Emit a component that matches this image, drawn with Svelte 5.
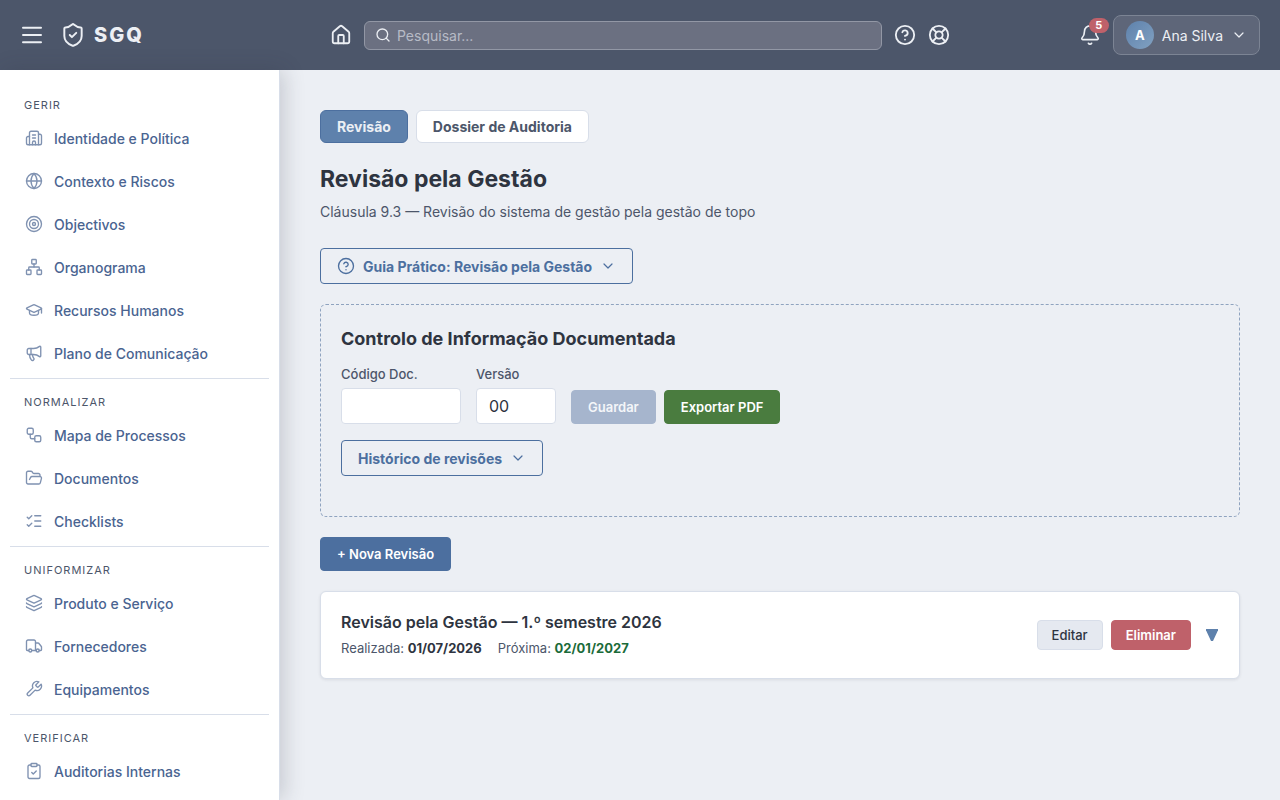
<script lang="ts">
  type NavItem = { icon: string; label: string };
  type NavGroup = { title: string; items: NavItem[] };

  // 24x24 stroke icons, one list of paths per name
  const icons: Record<string, string[]> = {
    menu: ['M3 4.7h18', 'M3 12h18', 'M3 19.3h18'],
    shield: [
      'M20 13c0 5-3.5 7.5-7.66 8.95a1 1 0 0 1-.67-.01C7.5 20.5 4 18 4 13V6a1 1 0 0 1 1-1c2 0 4.5-1.2 6.24-2.72a1.17 1.17 0 0 1 1.52 0C14.51 3.81 17 5 19 5a1 1 0 0 1 1 1z',
      'm9 12 2 2 4-4'
    ],
    home: [
      'M15 21v-8a1 1 0 0 0-1-1h-4a1 1 0 0 0-1 1v8',
      'M3 10a2 2 0 0 1 .709-1.528l7-5.999a2 2 0 0 1 2.582 0l7 5.999A2 2 0 0 1 21 10v9a2 2 0 0 1-2 2H5a2 2 0 0 1-2-2z'
    ],
    search: ['M19 11a8 8 0 1 1-16 0 8 8 0 0 1 16 0z', 'm21 21-4.3-4.3'],
    help: [
      'M22 12a10 10 0 1 1-20 0 10 10 0 0 1 20 0z',
      'M9.09 9a3 3 0 0 1 5.83 1c0 2-3 3-3 3',
      'M12 17h.01'
    ],
    lifebuoy: [
      'M22 12a10 10 0 1 1-20 0 10 10 0 0 1 20 0z',
      'm4.93 4.93 4.24 4.24',
      'm14.83 9.17 4.24-4.24',
      'm14.83 14.83 4.24 4.24',
      'm9.17 14.83-4.24 4.24',
      'M16 12a4 4 0 1 1-8 0 4 4 0 0 1 8 0z'
    ],
    bell: [
      'M10.268 21a2 2 0 0 0 3.464 0',
      'M3.262 15.326A1 1 0 0 0 4 17h16a1 1 0 0 0 .74-1.673C19.41 13.956 18 12.499 18 8A6 6 0 0 0 6 8c0 4.499-1.411 5.956-2.738 7.326'
    ],
    chevron: ['m6 9 6 6 6-6'],
    building: [
      'M10 12h4',
      'M10 8h4',
      'M14 21v-3a2 2 0 0 0-4 0v3',
      'M6 10H4a2 2 0 0 0-2 2v7a2 2 0 0 0 2 2h16a2 2 0 0 0 2-2V9a2 2 0 0 0-2-2h-2',
      'M6 21V5a2 2 0 0 1 2-2h8a2 2 0 0 1 2 2v16'
    ],
    globe: [
      'M22 12a10 10 0 1 1-20 0 10 10 0 0 1 20 0z',
      'M12 2a14.5 14.5 0 0 0 0 20 14.5 14.5 0 0 0 0-20',
      'M2 12h20'
    ],
    target: [
      'M22 12a10 10 0 1 1-20 0 10 10 0 0 1 20 0z',
      'M18 12a6 6 0 1 1-12 0 6 6 0 0 1 12 0z',
      'M14 12a2 2 0 1 1-4 0 2 2 0 0 1 4 0z'
    ],
    network: [
      'M17 16h4a1 1 0 0 1 1 1v4a1 1 0 0 1-1 1h-4a1 1 0 0 1-1-1v-4a1 1 0 0 1 1-1z',
      'M3 16h4a1 1 0 0 1 1 1v4a1 1 0 0 1-1 1H3a1 1 0 0 1-1-1v-4a1 1 0 0 1 1-1z',
      'M10 2h4a1 1 0 0 1 1 1v4a1 1 0 0 1-1 1h-4a1 1 0 0 1-1-1V3a1 1 0 0 1 1-1z',
      'M5 16v-3a1 1 0 0 1 1-1h12a1 1 0 0 1 1 1v3',
      'M12 12V8'
    ],
    graduation: [
      'M21.42 10.922a1 1 0 0 0-.019-1.838L12.83 5.18a2 2 0 0 0-1.66 0L2.6 9.08a1 1 0 0 0 0 1.832l8.57 3.908a2 2 0 0 0 1.66 0z',
      'M22 10v6',
      'M6 12.5V16a6 3 0 0 0 12 0v-3.5'
    ],
    megaphone: [
      'M11 6a13 13 0 0 0 8.4-2.8A1 1 0 0 1 21 4v12a1 1 0 0 1-1.6.8A13 13 0 0 0 11 14H5a2 2 0 0 1-2-2V8a2 2 0 0 1 2-2z',
      'M6 14a12 12 0 0 0 2.4 7.2 2 2 0 0 0 3.2-2.4A8 8 0 0 1 10 14',
      'M8 6v8'
    ],
    workflow: [
      'M5 3h4a2 2 0 0 1 2 2v4a2 2 0 0 1-2 2H5a2 2 0 0 1-2-2V5a2 2 0 0 1 2-2z',
      'M7 11v4a2 2 0 0 0 2 2h4',
      'M15 13h4a2 2 0 0 1 2 2v4a2 2 0 0 1-2 2h-4a2 2 0 0 1-2-2v-4a2 2 0 0 1 2-2z'
    ],
    folder: [
      'm6 14 1.5-2.9A2 2 0 0 1 9.24 10H20a2 2 0 0 1 1.94 2.5l-1.54 6a2 2 0 0 1-1.95 1.5H4a2 2 0 0 1-2-2V5a2 2 0 0 1 2-2h3.9a2 2 0 0 1 1.69.9l.81 1.2a2 2 0 0 0 1.67.9H18a2 2 0 0 1 2 2v2'
    ],
    checks: ['m3 17 2 2 4-4', 'm3 7 2 2 4-4', 'M13 5h8', 'M13 12h8', 'M13 19h8'],
    layers: [
      'M12.83 2.18a2 2 0 0 0-1.66 0L2.6 6.08a1 1 0 0 0 0 1.83l8.58 3.91a2 2 0 0 0 1.66 0l8.58-3.9a1 1 0 0 0 0-1.83z',
      'M2 12a1 1 0 0 0 .58.91l8.6 3.91a2 2 0 0 0 1.65 0l8.58-3.9A1 1 0 0 0 22 12',
      'M2 17a1 1 0 0 0 .58.91l8.6 3.91a2 2 0 0 0 1.65 0l8.58-3.9A1 1 0 0 0 22 17'
    ],
    truck: [
      'M14 18V6a2 2 0 0 0-2-2H4a2 2 0 0 0-2 2v11a1 1 0 0 0 1 1h2',
      'M15 18H9',
      'M19 18h2a1 1 0 0 0 1-1v-3.65a1 1 0 0 0-.22-.624l-3.48-4.35A1 1 0 0 0 17.52 8H14',
      'M19 18a2 2 0 1 1-4 0 2 2 0 0 1 4 0z',
      'M9 18a2 2 0 1 1-4 0 2 2 0 0 1 4 0z'
    ],
    wrench: [
      'M14.7 6.3a1 1 0 0 0 0 1.4l1.6 1.6a1 1 0 0 0 1.4 0l3.77-3.77a6 6 0 0 1-7.94 7.94l-6.91 6.91a2.12 2.12 0 0 1-3-3l6.91-6.91a6 6 0 0 1 7.94-7.94l-3.76 3.76z'
    ],
    clipboard: [
      'M9 2h6a1 1 0 0 1 1 1v2a1 1 0 0 1-1 1H9a1 1 0 0 1-1-1V3a1 1 0 0 1 1-1z',
      'M16 4h2a2 2 0 0 1 2 2v14a2 2 0 0 1-2 2H6a2 2 0 0 1-2-2V6a2 2 0 0 1 2-2h2',
      'm9 14 2 2 4-4'
    ]
  };

  const groups: NavGroup[] = [
    {
      title: 'Gerir',
      items: [
        { icon: 'building', label: 'Identidade e Política' },
        { icon: 'globe', label: 'Contexto e Riscos' },
        { icon: 'target', label: 'Objectivos' },
        { icon: 'network', label: 'Organograma' },
        { icon: 'graduation', label: 'Recursos Humanos' },
        { icon: 'megaphone', label: 'Plano de Comunicação' }
      ]
    },
    {
      title: 'Normalizar',
      items: [
        { icon: 'workflow', label: 'Mapa de Processos' },
        { icon: 'folder', label: 'Documentos' },
        { icon: 'checks', label: 'Checklists' }
      ]
    },
    {
      title: 'Uniformizar',
      items: [
        { icon: 'layers', label: 'Produto e Serviço' },
        { icon: 'truck', label: 'Fornecedores' },
        { icon: 'wrench', label: 'Equipamentos' }
      ]
    },
    {
      title: 'Verificar',
      items: [{ icon: 'clipboard', label: 'Auditorias Internas' }]
    }
  ];

  const tabs = ['Revisão', 'Dossier de Auditoria'];

  let activeTab = $state('Revisão');
  let search = $state('');
  let docCode = $state('');
  let version = $state('00');
</script>

{#snippet icon(name: string, size: number, stroke: number = 2)}
  <svg
    class="icon"
    width={size}
    height={size}
    viewBox="0 0 24 24"
    fill="none"
    stroke="currentColor"
    stroke-width={stroke}
    stroke-linecap="round"
    stroke-linejoin="round"
    aria-hidden="true"
  >
    {#each icons[name] as d}
      <path {d} />
    {/each}
  </svg>
{/snippet}

<div class="app">
  <header class="topbar">
    <div class="brand-area">
      <button class="icon-btn" aria-label="Menu">{@render icon('menu', 24)}</button>
      <a class="brand" href="#inicio">
        {@render icon('shield', 26, 1.8)}
        <span>SGQ</span>
      </a>
    </div>

    <div class="center">
      <a class="icon-btn" href="#inicio" aria-label="Início">{@render icon('home', 22)}</a>
      <label class="search">
        {@render icon('search', 16)}
        <input type="text" placeholder="Pesquisar..." aria-label="Pesquisar" bind:value={search} />
      </label>
      <button class="icon-btn" aria-label="Ajuda">{@render icon('help', 22)}</button>
      <button class="icon-btn" aria-label="Suporte">{@render icon('lifebuoy', 22)}</button>
    </div>

    <div class="account">
      <button class="icon-btn bell" aria-label="Notificações">
        {@render icon('bell', 22, 1.8)}
        <span class="badge">5</span>
      </button>
      <button class="user">
        <span class="avatar">A</span>
        <span>Ana Silva</span>
        {@render icon('chevron', 16, 1.8)}
      </button>
    </div>
  </header>

  <div class="body">
    <nav class="sidebar">
      {#each groups as group}
        <section class="group">
          <h2>{group.title}</h2>
          <ul>
            {#each group.items as item}
              <li>
                <a href="#{item.icon}">
                  {@render icon(item.icon, 18, 1.8)}
                  <span>{item.label}</span>
                </a>
              </li>
            {/each}
          </ul>
        </section>
      {/each}
    </nav>

    <main>
      <div class="tabs">
        {#each tabs as tab}
          <button class="tab" class:active={tab === activeTab} onclick={() => (activeTab = tab)}>{tab}</button>
        {/each}
      </div>

      <h1>Revisão pela Gestão</h1>
      <p class="subtitle">Cláusula 9.3 — Revisão do sistema de gestão pela gestão de topo</p>

      <button class="outline">
        {@render icon('help', 18, 1.8)}
        <span>Guia Prático: Revisão pela Gestão</span>
        {@render icon('chevron', 16, 1.8)}
      </button>

      <section class="doc-control">
        <h3>Controlo de Informação Documentada</h3>
        <div class="fields">
          <div class="field code">
            <label for="doc-code">Código Doc.</label>
            <input id="doc-code" type="text" bind:value={docCode} />
          </div>
          <div class="field version">
            <label for="doc-version">Versão</label>
            <input id="doc-version" type="text" bind:value={version} />
          </div>
          <div class="actions">
            <button class="btn primary" disabled>Guardar</button>
            <button class="btn export">Exportar PDF</button>
          </div>
        </div>
        <button class="outline">
          <span>Histórico de revisões</span>
          {@render icon('chevron', 16, 1.8)}
        </button>
      </section>

      <button class="btn primary">+ Nova Revisão</button>

      <article class="review">
        <div>
          <h4>Revisão pela Gestão — 1.º semestre 2026</h4>
          <div class="dates">
            <span>Realizada: <b>01/07/2026</b></span>
            <span>Próxima: <b class="next">02/01/2027</b></span>
          </div>
        </div>
        <div class="review-actions">
          <button class="btn small neutral">Editar</button>
          <button class="btn small danger">Eliminar</button>
          <button class="expand" aria-label="Expandir">
            <svg width="12" height="12" viewBox="0 0 12 12" aria-hidden="true">
              <path d="M0 0h12v1.2L7 12H5L0 1.2z" fill="currentColor" />
            </svg>
          </button>
        </div>
      </article>
    </main>
  </div>
</div>

<style>
  :global(body) {
    margin: 0;
    background: #eceff4;
  }

  .app {
    height: 100vh;
    display: flex;
    flex-direction: column;
    overflow: hidden;
    font-family: Inter, 'Liberation Sans', sans-serif;
    font-size: 14px;
    color: #2e3440;
    background: #eceff4;
  }

  .app * {
    box-sizing: border-box;
  }

  button,
  input {
    font: inherit;
    color: inherit;
  }

  button {
    cursor: pointer;
  }

  a {
    color: inherit;
    text-decoration: none;
  }

  h1,
  h2,
  h3,
  h4,
  p,
  ul {
    margin: 0;
    padding: 0;
  }

  .icon {
    display: block;
    flex: none;
  }

  .topbar {
    flex: none;
    display: grid;
    grid-template-columns: 1fr minmax(0, 620px) 1fr;
    align-items: center;
    height: 70px;
    padding: 0 20px;
    background: #4c566a;
    color: #eceff4;
  }

  .brand-area {
    display: flex;
    align-items: center;
    gap: 16px;
  }

  .icon-btn {
    display: block;
    padding: 0;
    border: 0;
    background: none;
  }

  .brand {
    display: flex;
    align-items: center;
    gap: 8px;
    font-size: 20px;
    font-weight: 800;
    letter-spacing: 2px;
  }

  .center {
    display: flex;
    align-items: center;
    gap: 12px;
  }

  .search {
    flex: 1;
    min-width: 0;
    display: flex;
    align-items: center;
    gap: 6px;
    height: 29px;
    padding: 0 10px;
    border: 1px solid #9297a5;
    border-radius: 6px;
    background: #6b7081;
  }

  .search input {
    flex: 1;
    min-width: 0;
    padding: 0;
    border: 0;
    outline: 0;
    background: none;
  }

  .search input::placeholder {
    color: #b7bbc6;
    opacity: 1;
  }

  .account {
    display: flex;
    align-items: center;
    justify-content: flex-end;
    gap: 12px;
  }

  .bell {
    position: relative;
  }

  .badge {
    position: absolute;
    top: -6px;
    right: -8px;
    min-width: 20px;
    height: 15px;
    border-radius: 8px;
    background: #bf616a;
    color: #fff;
    font-size: 11px;
    font-weight: 700;
    line-height: 15px;
    text-align: center;
  }

  .user {
    display: flex;
    align-items: center;
    gap: 8px;
    height: 40px;
    padding: 0 12px;
    border: 1px solid #7c8494;
    border-radius: 8px;
    background: #5e6679;
    white-space: nowrap;
  }

  .avatar {
    width: 28px;
    height: 28px;
    border-radius: 50%;
    background: linear-gradient(135deg, #5e81ac, #81a1c1);
    color: #fff;
    font-size: 13px;
    font-weight: 700;
    line-height: 28px;
    text-align: center;
  }

  .body {
    flex: 1;
    min-height: 0;
    display: flex;
  }

  .sidebar {
    flex: none;
    width: 280px;
    padding: 12px 10px;
    overflow: hidden;
    border-right: 1px solid #d8dee9;
    background: #fff;
    box-shadow: 4px 0 20px rgba(46, 52, 64, 0.2);
  }

  .group {
    padding: 15px 0 5px;
    border-bottom: 1px solid #d8dee9;
  }

  .group:last-child {
    border-bottom: 0;
  }

  .group h2 {
    margin-bottom: 5px;
    padding: 0 14px;
    color: #4c566a;
    font-size: 11px;
    font-weight: 400;
    line-height: 16px;
    letter-spacing: 1px;
    text-transform: uppercase;
  }

  .group ul {
    display: grid;
    gap: 3px;
    list-style: none;
  }

  .group a {
    display: flex;
    align-items: center;
    gap: 11px;
    height: 40px;
    padding: 0 15px;
    color: #4a6491;
    font-weight: 500;
  }

  .group .icon {
    opacity: 0.7;
  }

  main {
    flex: 1;
    min-width: 0;
    padding: 40px;
    overflow: hidden;
  }

  .tabs {
    display: flex;
    gap: 8px;
    margin-bottom: 20px;
  }

  .tab {
    height: 33px;
    padding: 0 16px;
    border: 1px solid #d8dee9;
    border-radius: 6px;
    background: #fff;
    color: #4c566a;
    font-weight: 700;
  }

  .tab.active {
    border-color: #4c6f9f;
    background: #5e81ac;
    color: #eceff4;
  }

  h1 {
    margin-bottom: 8px;
    font-size: 23px;
    font-weight: 700;
    line-height: 32px;
  }

  .subtitle {
    margin-bottom: 27px;
    color: #4c566a;
    line-height: 18px;
  }

  .outline {
    display: flex;
    align-items: center;
    gap: 8px;
    height: 36px;
    padding: 0 16px;
    border: 1px solid #4c6f9f;
    border-radius: 4px;
    background: none;
    color: #4c6f9f;
    font-weight: 700;
  }

  .doc-control {
    margin: 20px 0;
    padding: 20px 20px 40px;
    border: 1px dashed #8fa3bf;
    border-radius: 6px;
  }

  h3 {
    margin-bottom: 12px;
    font-size: 18px;
    font-weight: 700;
    line-height: 28px;
  }

  .fields {
    display: flex;
    align-items: flex-end;
    gap: 15px;
    margin-bottom: 16px;
  }

  .field {
    display: grid;
    gap: 5px;
  }

  .field.code {
    width: 120px;
  }

  .field.version {
    width: 80px;
  }

  .field label {
    color: #4c566a;
    font-size: 13px;
    font-weight: 500;
    line-height: 18px;
  }

  .field input {
    width: 100%;
    height: 36px;
    padding: 0 12px;
    border: 1px solid #d8dee9;
    border-radius: 4px;
    background: #fff;
    font-size: 16px;
  }

  .actions {
    display: flex;
    gap: 8px;
  }

  .btn {
    height: 34px;
    padding: 0 16px;
    border: 1px solid transparent;
    border-radius: 4px;
    color: #fff;
    font-size: 13px;
    font-weight: 600;
  }

  .primary {
    border-color: #4c6f9f;
    background: #4c6f9f;
  }

  .primary:disabled {
    border-color: #a6b5cd;
    background: #a6b5cd;
    color: #f4f6f9;
    cursor: default;
  }

  .export {
    border-color: #4a7c3f;
    background: #4a7c3f;
  }

  .review {
    display: flex;
    align-items: center;
    justify-content: space-between;
    gap: 20px;
    margin-top: 20px;
    padding: 20px;
    border: 1px solid #d8dee9;
    border-radius: 6px;
    background: #fff;
    box-shadow: 0 1px 3px rgba(46, 52, 64, 0.1);
  }

  h4 {
    margin-bottom: 7px;
    font-size: 16px;
    font-weight: 600;
    line-height: 20px;
  }

  .dates {
    display: flex;
    gap: 16px;
    color: #4c566a;
    font-size: 13px;
    line-height: 19px;
  }

  .dates b {
    color: #2e3440;
    font-weight: 700;
  }

  .dates .next {
    color: #1b6b3a;
  }

  .review-actions {
    display: flex;
    align-items: center;
    gap: 8px;
  }

  .small {
    height: 30px;
    padding: 0 14px;
  }

  .neutral {
    border-color: #d8dee9;
    background: #e5e9f0;
    color: #2e3440;
    font-weight: 500;
  }

  .danger {
    background: #bf616a;
    border-color: #bf616a;
  }

  .expand {
    padding: 0 1px 0 7px;
    border: 0;
    background: none;
    color: #5e81ac;
  }

  .expand svg {
    display: block;
  }
</style>
